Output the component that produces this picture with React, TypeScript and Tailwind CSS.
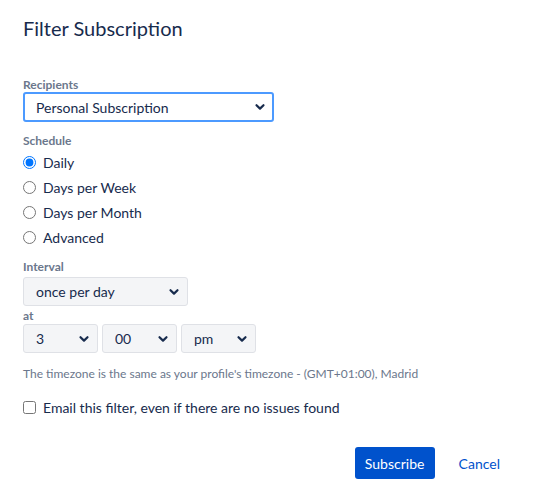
import React from "react";

const Chevron = () => (
  <svg width="12" height="12" viewBox="0 0 12 12" className="pointer-events-none absolute right-[8px] top-1/2 -translate-y-1/2">
    <path d="M2.5 4.2 L6 7.6 L9.5 4.2" fill="none" stroke="#172b4d" strokeWidth="2.2" strokeLinecap="round" strokeLinejoin="round" />
  </svg>
);

function Select({ value, className, focused }: { value: string; className: string; focused?: boolean }) {
  return (
    <div className={`relative ${className}`}>
      <select
        defaultValue={value}
        className={`h-full w-full appearance-none rounded-[3px] text-[14px] text-[#172b4d] outline-none ${
          focused ? "border-2 border-[#4c9aff] bg-white pl-[11px]" : "border border-[#dfe1e6] bg-[#f4f5f7] pl-[12px]"
        }`}
      >
        <option>{value}</option>
      </select>
      <Chevron />
    </div>
  );
}

export default function App() {
  const radios = ["Daily", "Days per Week", "Days per Month", "Advanced"];
  return (
    <div className="h-[492px] w-[535px] bg-white text-[#172b4d]" style={{ fontFamily: '"Lato", sans-serif' }}>
      <div className="px-[23px] pt-[15px]">
        <h1 className="text-[20px] leading-[26px] font-normal">Filter Subscription</h1>
        <div className="mt-[37px] text-[12px] leading-[14px] font-bold text-[#6b778c]">Recipients</div>
        <Select value="Personal Subscription" className="h-[30px] w-[251px]" focused />
        <div className="mt-[12px] text-[12px] leading-[14px] font-bold text-[#6b778c]">Schedule</div>
        <div className="mt-[2px] flex flex-col">
          {radios.map((r, i) => (
            <label key={r} className="flex h-[25px] items-center gap-[7px] text-[14px]">
              <input type="radio" name="s" defaultChecked={i === 0} className="m-0 h-[13px] w-[13px]" />
              <span>{r}</span>
            </label>
          ))}
        </div>
        <div className="mt-[10px] text-[12px] leading-[14px] font-bold text-[#6b778c]">Interval</div>
        <Select value="once per day" className="mt-[3px] h-[29px] w-[165px]" />
        <div className="mt-[2px] text-[12px] leading-[16px] font-bold text-[#6b778c]">at</div>
        <div className="flex gap-[4px]">
          <Select value="3" className="h-[29px] w-[75px]" />
          <Select value="00" className="h-[29px] w-[75px]" />
          <Select value="pm" className="h-[29px] w-[75px]" />
        </div>
        <div className="mt-[13px] text-[12px] leading-[16px] text-[#6b778c]">
          The timezone is the same as your profile's timezone - (GMT+01:00), Madrid
        </div>
        <label className="mt-[15px] flex items-center gap-[7px] text-[14px]">
          <input type="checkbox" className="m-0 h-[13px] w-[13px]" />
          <span>Email this filter, even if there are no issues found</span>
        </label>
        <div className="mt-[29px] flex items-center justify-end pr-[12px]">
          <button className="h-[32px] w-[80px] rounded-[3px] bg-[#0052cc] text-[14px] text-white">Subscribe</button>
          <button className="ml-[24px] h-[32px] text-[14px] text-[#0052cc]">Cancel</button>
        </div>
      </div>
    </div>
  );
}
